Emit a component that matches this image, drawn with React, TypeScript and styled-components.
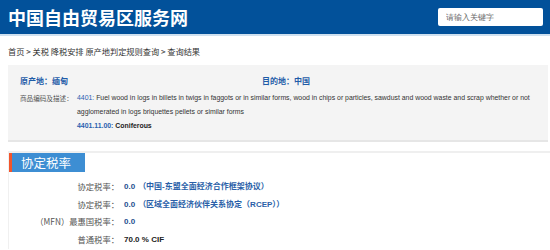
import React from "react";
import styled, { createGlobalStyle } from "styled-components";

const Global = createGlobalStyle`
  html, body { margin: 0; padding: 0; background: #fff; }
  body { font-family: Arial, "Liberation Sans", "Noto Sans CJK SC", sans-serif; color: #333; }
  * { box-sizing: border-box; }
`;

const Header = styled.header`
  height: 36px;
  background: #02519a;
  border-bottom: 2px solid #cfe0ef;
  display: flex;
  align-items: center;
  justify-content: space-between;
  padding: 0 7px 0 8px;
`;

const Title = styled.h1`
  margin: 0;
  font-size: 18px;
  font-weight: bold;
  color: #fff;
  font-family: "Noto Sans CJK SC", sans-serif;
`;

const Search = styled.input`
  width: 105px;
  height: 18px;
  border: none;
  border-radius: 2px;
  background: #fff;
  font-size: 8px;
  padding: 0 8px;
  color: #555;
  &::placeholder { color: #666; }
`;

const Crumbs = styled.div`
  font-size: 8.2px;
  color: #333;
  padding: 9px 8px 0;
  height: 29px;
  font-family: "Noto Sans CJK SC", sans-serif;
`;

const InfoPanel = styled.section`
  margin: 0 2px 0 8px;
  background: #f4f4f4;
  border-bottom: 2px solid #e6e6e6;
  padding: 5px 12px 7px;
`;

const PlaceRow = styled.div`
  display: grid;
  grid-template-columns: 242px 1fr;
  font-size: 8px;
  font-weight: bold;
  color: #1f5ca8;
  height: 20px;
  align-items: center;
  font-family: "Noto Sans CJK SC", sans-serif;
`;

const DescRow = styled.div`
  display: flex;
  font-size: 6.9px;
  line-height: 14px;
  margin-top: 1px;
`;

const DescLabel = styled.span`
  color: #555;
  width: 57px;
  flex-shrink: 0;
  white-space: nowrap;
  font-size: 6.6px;
  font-family: "Noto Sans CJK SC", sans-serif;
`;

const DescBody = styled.div`
  color: #333;
`;

const Code = styled.span<{ $bold?: boolean }>`
  color: #2a62b0;
  font-weight: ${(p) => (p.$bold ? "bold" : "normal")};
`;

const Strong = styled.span`
  font-weight: bold;
  color: #222;
`;

const RateSection = styled.section`
  margin: 9px 0 0 8px;
  border-top: 2px solid #efefef;
  border-left: 1px solid #f0f0f0;
`;

const SectionHead = styled.h2`
  margin: 0;
  display: inline-flex;
  align-items: center;
  height: 19px;
  border-left: 3px solid #f2552c;
  background: #3d8ed3;
  color: #fff;
  font-size: 12.5px;
  font-weight: normal;
  padding: 0 14px 0 9px;
  font-family: "Noto Sans CJK SC", sans-serif;
`;

const Rows = styled.div`
  padding-top: 6px;
  display: grid;
  grid-template-columns: 110px 1fr;
`;

const RateLabel = styled.div`
  text-align: right;
  font-size: 8.3px;
  color: #555;
  height: 17.7px;
  line-height: 17.7px;
  font-family: "Noto Sans CJK SC", sans-serif;
`;

const RateValue = styled.div<{ $dark?: boolean }>`
  padding-left: 5px;
  font-size: 8px;
  font-weight: bold;
  color: ${(p) => (p.$dark ? "#222" : "#1f4f8f")};
  height: 17.7px;
  line-height: 17.7px;
  white-space: nowrap;
  font-family: Arial, "Liberation Sans", "Noto Sans CJK SC", sans-serif;
`;

const Note = styled.span`
  margin-left: 3px;
  color: #2a5fa8;
`;

const rates = [
  { label: "协定税率：", value: "0.0", note: "（中国-东盟全面经济合作框架协议）" },
  { label: "协定税率：", value: "0.0", note: "（区域全面经济伙伴关系协定（RCEP））" },
  { label: "（MFN）最惠国税率：", value: "0.0" },
  { label: "普通税率：", value: "70.0 % CIF", dark: true },
];

export default function App() {
  return (
    <>
      <Global />
      <Header>
        <Title>中国自由贸易区服务网</Title>
        <Search placeholder="请输入关键字" />
      </Header>
      <Crumbs>首页 &gt; 关税 降税安排 原产地判定规则查询 &gt; 查询结果</Crumbs>
      <InfoPanel>
        <PlaceRow>
          <span>原产地：缅甸</span>
          <span>目的地：中国</span>
        </PlaceRow>
        <DescRow>
          <DescLabel>商品编码及描述：</DescLabel>
          <DescBody>
            <Code>4401:</Code> Fuel wood in logs in billets in twigs in faggots or in similar forms, wood in chips or particles, sawdust and wood waste and scrap whether or not agglomerated in logs briquettes pellets or similar forms
            <br />
            <Code $bold>4401.11.00:</Code> <Strong>Coniferous</Strong>
          </DescBody>
        </DescRow>
      </InfoPanel>
      <RateSection>
        <SectionHead>协定税率</SectionHead>
        <Rows>
          {rates.map((r, i) => (
            <React.Fragment key={i}>
              <RateLabel>{r.label}</RateLabel>
              <RateValue $dark={r.dark}>
                {r.value}
                {r.note && <Note>{r.note}</Note>}
              </RateValue>
            </React.Fragment>
          ))}
        </Rows>
      </RateSection>
    </>
  );
}
